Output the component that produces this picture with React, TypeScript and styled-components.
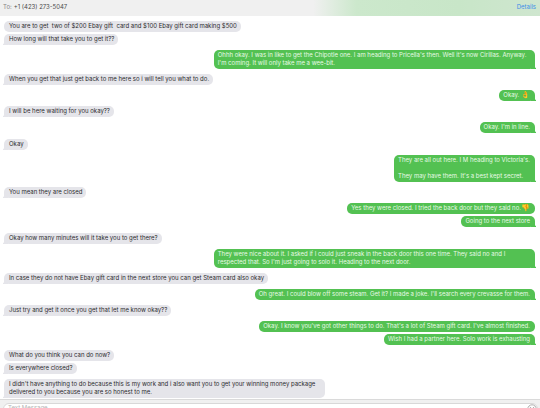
import React from 'react';
import styled, { createGlobalStyle, css } from 'styled-components';

type Side = 'in' | 'out';

interface Message {
  text: string;
  emoji?: string;
  wide?: boolean;
}

interface Group {
  side: Side;
  late?: boolean;
  messages: Message[];
}

const GlobalStyle = createGlobalStyle`
  *, *::before, *::after {
    box-sizing: border-box;
  }

  body {
    margin: 0;
    overflow: hidden;
    background: #ffffff;
    font-family: Inter, 'Liberation Sans', sans-serif;
    font-size: 6px;
    line-height: 8px;
  }
`;

const Window = styled.main`
  display: flex;
  flex-direction: column;
  height: 100vh;
  overflow: hidden;
`;

const Header = styled.header`
  display: flex;
  flex: none;
  align-items: center;
  justify-content: space-between;
  height: 16px;
  padding: 0 4px 3px 3px;
  background: linear-gradient(to right, #f0f0f0 58%, #cce8cc 66%, #c8e6c8 85%, #cfe6cf);
`;

const Recipient = styled.h1`
  display: flex;
  gap: 2px;
  margin: 0;
  font-size: 6px;
  font-weight: 400;
  color: #4c4c4c;
`;

const RecipientLabel = styled.span`
  color: #858585;
`;

const DetailsLink = styled.a`
  color: #3d8ee8;
  text-decoration: none;
`;

const Thread = styled.section`
  display: flex;
  flex: 1;
  flex-direction: column;
  gap: 5px;
  min-height: 0;
  overflow: hidden;
  padding: 5px 5px 0 4px;
`;

const MessageGroup = styled.div<{ $side: Side; $late?: boolean }>`
  display: flex;
  flex: none;
  flex-direction: column;
  gap: 2px;
  align-items: ${({ $side }) => ($side === 'in' ? 'flex-start' : 'flex-end')};
  margin-top: ${({ $late }) => ($late ? '1px' : '0')};
`;

const inBubble = css`
  padding: 1px 4px 2px 5px;
  color: #2b2b2d;
  background: #e5e5ea;

  &:last-child::after {
    content: '';
    position: absolute;
    bottom: 0;
    left: -1px;
    width: 5px;
    height: 5px;
    background: #e5e5ea;
    clip-path: polygon(20% 0, 100% 0, 100% 100%, 0 100%, 0 85%, 20% 65%);
  }
`;

const outBubble = css`
  padding: 1px 5px 2px 4px;
  color: #e8fae6;
  background: #53c152;

  &:last-child::after {
    content: '';
    position: absolute;
    right: -1px;
    bottom: 0;
    width: 5px;
    height: 5px;
    background: #53c152;
    clip-path: polygon(80% 0, 0 0, 0 100%, 100% 100%, 100% 85%, 80% 65%);
  }
`;

const Bubble = styled.p<{ $side: Side; $wide?: boolean }>`
  position: relative;
  width: ${({ $wide }) => ($wide ? '60.5%' : 'auto')};
  margin: 0;
  border-radius: 5px;
  white-space: pre-wrap;
  ${({ $side }) => ($side === 'in' ? inBubble : outBubble)}
`;

const Emoji = styled.span`
  font-size: 7px;
  line-height: 6px;
`;

const Composer = styled.footer`
  flex: none;
  height: 9px;
  padding: 3px 2px 0 3px;
  overflow: hidden;
  border-top: 1px solid #dadada;
  background: #f0f0f0;
`;

const Field = styled.div`
  display: flex;
  align-items: flex-start;
  height: 13px;
  padding: 0 0 0 4px;
  border: 1px solid #d8d8d8;
  border-radius: 6px;
  background: #ffffff;
`;

const TextInput = styled.input`
  flex: 1;
  min-width: 0;
  height: 8px;
  padding: 0;
  border: 0;
  outline: none;
  background: transparent;
  font: inherit;

  &::placeholder {
    color: #b4b4b4;
    opacity: 1;
  }
`;

const EmojiButton = styled.button`
  display: flex;
  flex: none;
  padding: 0;
  border: 0;
  background: transparent;
  color: #8c8c8c;
`;

const groups: Group[] = [
  {
    side: 'in',
    messages: [
      { text: 'You are to get  two of $200 Ebay gift  card and $100 Ebay gift card making $500' },
      { text: 'How long will that take you to get it??' },
    ],
  },
  {
    side: 'out',
    messages: [
      {
        wide: true,
        text: "Ohhh okay. I was in like to get the Chipotle one. I am heading to Pricella's then. Well it's now Cirillas. Anyway. I'm coming. It will only take me a wee-bit.",
      },
    ],
  },
  { side: 'in', messages: [{ text: 'When you get that just get back to me here so i will tell you what to do.' }] },
  { side: 'out', messages: [{ text: 'Okay. ', emoji: '👌' }] },
  { side: 'in', messages: [{ text: 'I will be here waiting for you okay??' }] },
  { side: 'out', messages: [{ text: "Okay. I'm in line." }] },
  { side: 'in', late: true, messages: [{ text: 'Okay' }] },
  {
    side: 'out',
    messages: [{ text: "They are all out here. I M heading to Victoria's.\n\nThey may have them. It's a best kept secret." }],
  },
  { side: 'in', messages: [{ text: 'You mean they are closed' }] },
  {
    side: 'out',
    messages: [
      { text: 'Yes they were closed. I tried the back door but they said no.', emoji: '👎' },
      { text: 'Going to the next store' },
    ],
  },
  { side: 'in', late: true, messages: [{ text: 'Okay how many minutes will it take you to get there?' }] },
  {
    side: 'out',
    messages: [
      {
        wide: true,
        text: "They were nice about it. I asked if I could just sneak in the back door this one time. They said no and I respected that. So I'm just going to solo it. Heading to the next door.",
      },
    ],
  },
  {
    side: 'in',
    messages: [{ text: 'In case they do not have Ebay gift card in the next store you can get Steam card also okay' }],
  },
  {
    side: 'out',
    messages: [{ text: "Oh great. I could blow off some steam. Get it? I made a joke. I'll search every crevasse for them." }],
  },
  { side: 'in', messages: [{ text: 'Just try and get it once you get that let me know okay??' }] },
  {
    side: 'out',
    messages: [
      { text: "Okay. I know you've got other things to do. That's a lot of Steam gift card. I've almost finished." },
      { text: 'Wish I had a partner here. Solo work is exhausting' },
    ],
  },
  { side: 'in', messages: [{ text: 'What do you think you can do now?' }, { text: 'Is everywhere closed?' }] },
  {
    side: 'in',
    messages: [
      {
        wide: true,
        text: "I didn't have anything to do because this is my work and i also want you to get your winning money package delivered to you because you are so honest to me.",
      },
    ],
  },
];

function SmileyIcon() {
  return (
    <svg width="10" height="10" viewBox="0 0 10 10" fill="none" stroke="currentColor" strokeWidth="0.7" aria-hidden="true">
      <circle cx="5" cy="5" r="4.2" />
      <circle cx="3.5" cy="4" r="0.4" fill="currentColor" />
      <circle cx="6.5" cy="4" r="0.4" fill="currentColor" />
      <path d="M2.8 6c.8 1.6 3.6 1.6 4.4 0" />
    </svg>
  );
}

export default function App() {
  return (
    <>
      <GlobalStyle />
      <Window>
        <Header>
          <Recipient>
            <RecipientLabel>To:</RecipientLabel>
            <span>+1 (423) 273-5047</span>
          </Recipient>
          <DetailsLink href="#details">Details</DetailsLink>
        </Header>
        <Thread aria-label="Conversation">
          {groups.map((group, index) => (
            <MessageGroup key={index} $side={group.side} $late={group.late}>
              {group.messages.map((message) => (
                <Bubble key={message.text} $side={group.side} $wide={message.wide}>
                  {message.text}
                  {message.emoji && <Emoji>{message.emoji}</Emoji>}
                </Bubble>
              ))}
            </MessageGroup>
          ))}
        </Thread>
        <Composer>
          <Field>
            <TextInput type="text" placeholder="Text Message" aria-label="Text Message" />
            <EmojiButton type="button" aria-label="Emoji">
              <SmileyIcon />
            </EmojiButton>
          </Field>
        </Composer>
      </Window>
    </>
  );
}
